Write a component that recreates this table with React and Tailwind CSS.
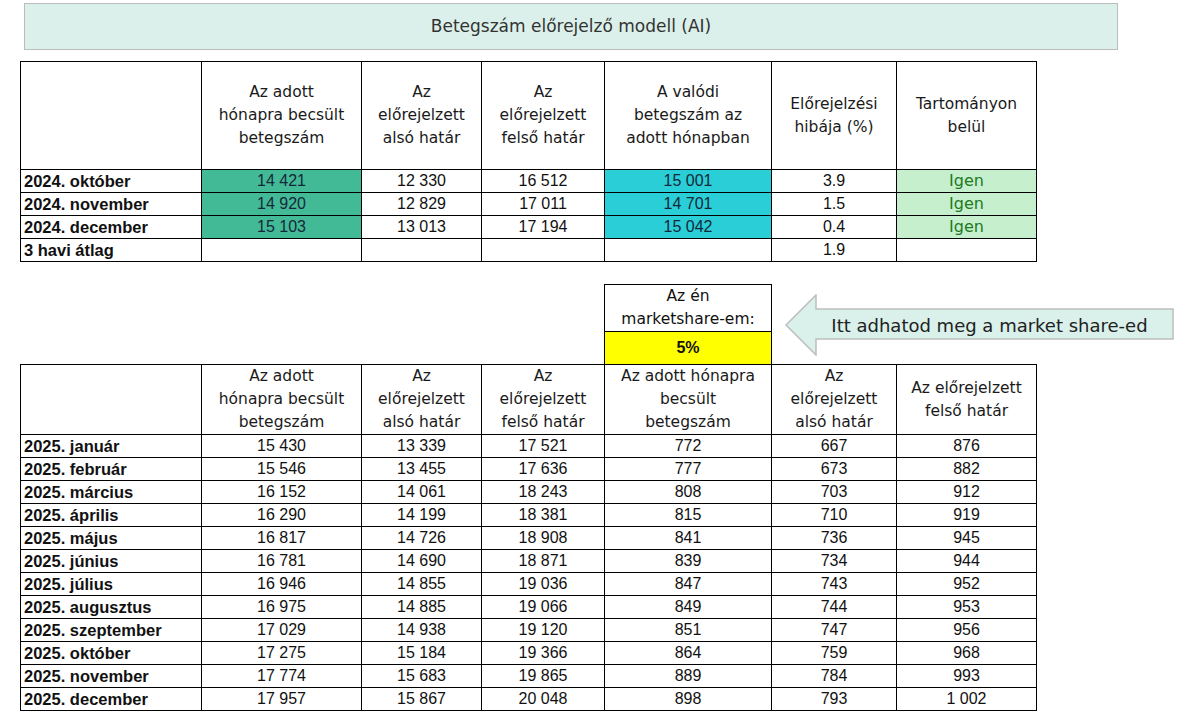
import React from 'react';

const sans = { fontFamily: '"Liberation Sans", Arial, sans-serif' };
const wide = { fontFamily: '"DejaVu Sans", "Liberation Sans", sans-serif' };

const past = [
  { label: '2024. október', est: '14 421', low: '12 330', high: '16 512', real: '15 001', err: '3.9', ok: 'Igen' },
  { label: '2024. november', est: '14 920', low: '12 829', high: '17 011', real: '14 701', err: '1.5', ok: 'Igen' },
  { label: '2024. december', est: '15 103', low: '13 013', high: '17 194', real: '15 042', err: '0.4', ok: 'Igen' },
];

const future = [
  ['2025. január', '15 430', '13 339', '17 521', '772', '667', '876'],
  ['2025. február', '15 546', '13 455', '17 636', '777', '673', '882'],
  ['2025. március', '16 152', '14 061', '18 243', '808', '703', '912'],
  ['2025. április', '16 290', '14 199', '18 381', '815', '710', '919'],
  ['2025. május', '16 817', '14 726', '18 908', '841', '736', '945'],
  ['2025. június', '16 781', '14 690', '18 871', '839', '734', '944'],
  ['2025. július', '16 946', '14 855', '19 036', '847', '743', '952'],
  ['2025. augusztus', '16 975', '14 885', '19 066', '849', '744', '953'],
  ['2025. szeptember', '17 029', '14 938', '19 120', '851', '747', '956'],
  ['2025. október', '17 275', '15 184', '19 366', '864', '759', '968'],
  ['2025. november', '17 774', '15 683', '19 865', '889', '784', '993'],
  ['2025. december', '17 957', '15 867', '20 048', '898', '793', '1 002'],
];

// header cells, wrapped the way the sheet wraps them
const head1 = [
  ['Az adott', 'hónapra becsült', 'betegszám'],
  ['Az', 'előrejelzett', 'alsó határ'],
  ['Az', 'előrejelzett', 'felső határ'],
  ['A valódi', 'betegszám az', 'adott hónapban'],
  ['Előrejelzési', 'hibája (%)'],
  ['Tartományon', 'belül'],
];

const head2 = [
  ['Az adott', 'hónapra becsült', 'betegszám'],
  ['Az', 'előrejelzett', 'alsó határ'],
  ['Az', 'előrejelzett', 'felső határ'],
  ['Az adott hónapra', 'becsült', 'betegszám'],
  ['Az', 'előrejelzett', 'alsó határ'],
  ['Az előrejelzett', 'felső határ'],
];

const Cols = () => (
  <colgroup>
    <col className="w-[181px]" />
    <col className="w-[160px]" />
    <col className="w-[120px]" />
    <col className="w-[123px]" />
    <col className="w-[167px]" />
    <col className="w-[125px]" />
    <col className="w-[140px]" />
  </colgroup>
);

const th = 'border border-black font-normal text-center align-middle leading-[23px] p-0 text-[15.5px] text-[#1a1a1a] whitespace-nowrap';
const td = 'border border-black text-center h-[23px] p-0 leading-[22px]';
const tdLabel = 'border border-black text-left h-[23px] py-0 pl-[3px] font-bold text-[16.5px] leading-[22px] whitespace-nowrap';

const HeadRow = ({ cells, h }) => (
  <tr className={h}>
    <th className={th}></th>
    {cells.map((lines, i) => (
      <th key={i} className={th} style={wide}>
        {lines.map((l) => (
          <div key={l}>{l}</div>
        ))}
      </th>
    ))}
  </tr>
);

const ArrowNote = () => (
  <div className="relative ml-[12px] mt-[10px] w-[391px] h-[62px]">
    <svg className="absolute inset-0" width="391" height="62" viewBox="0 0 391 62">
      <polygon
        points="2,31 32,1 32,15 389,15 389,45 32,45 32,61"
        fill="#daf0ea"
        stroke="#bdbdbd"
        strokeWidth="1.5"
      />
    </svg>
    <div className="absolute inset-0 pl-[20px] flex items-center justify-center text-[18px] text-[#222]" style={wide}>
      Itt adhatod meg a market share-ed
    </div>
  </div>
);

export default function App() {
  return (
    <div className="bg-white w-[1193px] h-[720px] text-[16px] text-[#111]" style={sans}>
      <div
        className="ml-[24px] mt-[3px] w-[1094px] h-[47px] bg-[#dbf0ea] border border-[#bcbcbc] flex items-center justify-center text-[17px] text-[#333]"
        style={wide}
      >
        Betegszám előrejelző modell (AI)
      </div>

      <table className="ml-[20px] mt-[11px] table-fixed border-collapse border border-black w-[1017px]">
        <Cols />
        <thead>
          <HeadRow cells={head1} h="h-[108px]" />
        </thead>
        <tbody>
          {past.map((r) => (
            <tr key={r.label}>
              <td className={tdLabel}>{r.label}</td>
              <td className={`${td} bg-[#43ba96] text-[#15283a]`}>{r.est}</td>
              <td className={td}>{r.low}</td>
              <td className={td}>{r.high}</td>
              <td className={`${td} bg-[#29ced6] text-[#15283a]`}>{r.real}</td>
              <td className={td}>{r.err}</td>
              <td className={`${td} bg-[#c6efce] text-[#1e7a1e]`} style={wide}>{r.ok}</td>
            </tr>
          ))}
          <tr>
            <td className={tdLabel}>3 havi átlag</td>
            <td className={td}></td>
            <td className={td}></td>
            <td className={td}></td>
            <td className={td}></td>
            <td className={td}>1.9</td>
            <td className={td}></td>
          </tr>
        </tbody>
      </table>

      <div className="flex items-start mt-[22px]">
        <div className="ml-[604px] w-[168px] border border-b-0 border-black">
          <div className="h-[46px] flex flex-col items-center justify-center leading-[23px] text-center text-[15.5px]" style={wide}>
            <span>Az én</span>
            <span>marketshare-em:</span>
          </div>
          <div className="h-[33px] bg-[#ffff00] border-t border-black flex items-center justify-center font-bold">
            5%
          </div>
        </div>
        <ArrowNote />
      </div>

      <table className="ml-[20px] table-fixed border-collapse border border-black w-[1017px]">
        <Cols />
        <thead>
          <HeadRow cells={head2} h="h-[69px]" />
        </thead>
        <tbody>
          {future.map((r) => (
            <tr key={r[0]}>
              <td className={tdLabel}>{r[0]}</td>
              {r.slice(1).map((v, i) => (
                <td key={i} className={td}>{v}</td>
              ))}
            </tr>
          ))}
        </tbody>
      </table>
    </div>
  );
}
